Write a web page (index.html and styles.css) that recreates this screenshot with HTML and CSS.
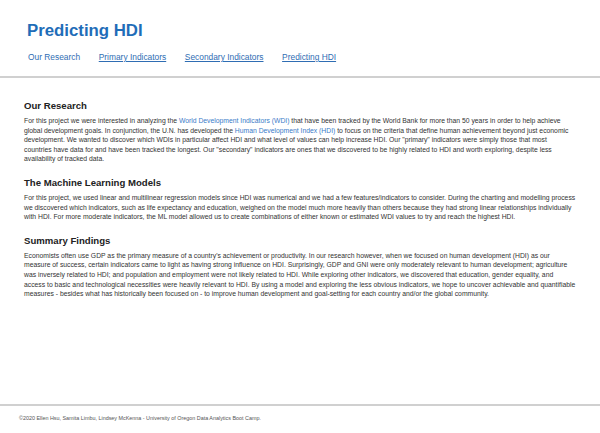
FILE: index.html
```html
<!DOCTYPE html>
<html lang="en">
<head>
<meta charset="utf-8">
<title>Predicting HDI</title>
<link rel="stylesheet" href="styles.css">
</head>
<body>
<div class="page">
  <header class="header">
    <h1 class="title">Predicting HDI</h1>
    <nav class="nav">
      <a class="nav-link active" href="#">Our Research</a>
      <a class="nav-link" href="#">Primary Indicators</a>
      <a class="nav-link" href="#">Secondary Indicators</a>
      <a class="nav-link" href="#">Predicting HDI</a>
    </nav>
  </header>
  <main class="main">
    <section class="section">
      <h2 class="heading">Our Research</h2>
      <p class="text">For this project we were interested in analyzing the <a class="link" href="#">World Development Indicators (WDI)</a> that have been tracked by the World Bank for more than 50 years in order to help achieve global development goals. In conjunction, the U.N. has developed the <a class="link" href="#">Human Development Index (HDI)</a> to focus on the criteria that define human achievement beyond just economic development. We wanted to discover which WDIs in particular affect HDI and what level of values can help increase HDI. Our "primary" indicators were simply those that most countries have data for and have been tracked the longest. Our "secondary" indicators are ones that we discovered to be highly related to HDI and worth exploring, despite less availability of tracked data.</p>
    </section>
    <section class="section">
      <h2 class="heading">The Machine Learning Models</h2>
      <p class="text">For this project, we used linear and multilinear regression models since HDI was numerical and we had a few features/indicators to consider. During the charting and modelling process we discovered which indicators, such as life expectancy and education, weighed on the model much more heavily than others because they had strong linear relationships individually with HDI. For more moderate indicators, the ML model allowed us to create combinations of either known or estimated WDI values to try and reach the highest HDI.</p>
    </section>
    <section class="section">
      <h2 class="heading">Summary Findings</h2>
      <p class="text">Economists often use GDP as the primary measure of a country's achievement or productivity. In our research however, when we focused on human development (HDI) as our measure of success, certain indicators came to light as having strong influence on HDI. Surprisingly, GDP and GNI were only moderately relevant to human development; agriculture was inversely related to HDI; and population and employment were not likely related to HDI. While exploring other indicators, we discovered that education, gender equality, and access to basic and technological necessities were heavily relevant to HDI. By using a model and exploring the less obvious indicators, we hope to uncover achievable and quantifiable measures - besides what has historically been focused on - to improve human development and goal-setting for each country and/or the global community.</p>
    </section>
  </main>
  <footer class="footer">
    <p class="footer-text">©2020 Ellen Hsu, Samita Limbu, Lindsey McKenna - University of Oregon Data Analytics Boot Camp.</p>
  </footer>
</div>
</body>
</html>
```

FILE: styles.css
```css
html, body {
  margin: 0;
  padding: 0;
  background: #ffffff;
}
body {
  font-family: "Liberation Sans", Arial, sans-serif;
  color: #333333;
}
.page {
  display: flex;
  flex-direction: column;
  min-height: 433px;
}
.header {
  padding: 21px 0 0 27px;
  height: 55px;
  border-bottom: 2px solid #d0d0d0;
}
.title {
  margin: 0;
  font-size: 16.8px;
  line-height: 20px;
  font-weight: bold;
  color: #1f6db8;
}
.nav {
  display: flex;
  gap: 18.6px;
  margin-top: 10px;
  padding-left: 1px;
  font-size: 8.4px;
  line-height: 12px;
}
.nav-link {
  color: #2f6db3;
  text-decoration: underline;
}
.nav-link.active {
  text-decoration: none;
}
.main {
  padding: 21px 24.5px 0 24px;
}
.section {
  margin-bottom: 12px;
}
.heading {
  margin: 0 0 4px 0;
  font-size: 9.6px;
  line-height: 13px;
  font-weight: bold;
  color: #222222;
}
.text {
  margin: 0;
  font-size: 6.8px;
  line-height: 9.6px;
  color: #333333;
}
.link {
  color: #3a7bc8;
  text-decoration: none;
}
.footer {
  margin-top: auto;
  border-top: 2px solid #d0d0d0;
  height: 27px;
  padding-left: 19px;
}
.footer-text {
  margin: 9px 0 0 0;
  font-size: 5.4px;
  line-height: 7px;
  color: #555555;
}
```
